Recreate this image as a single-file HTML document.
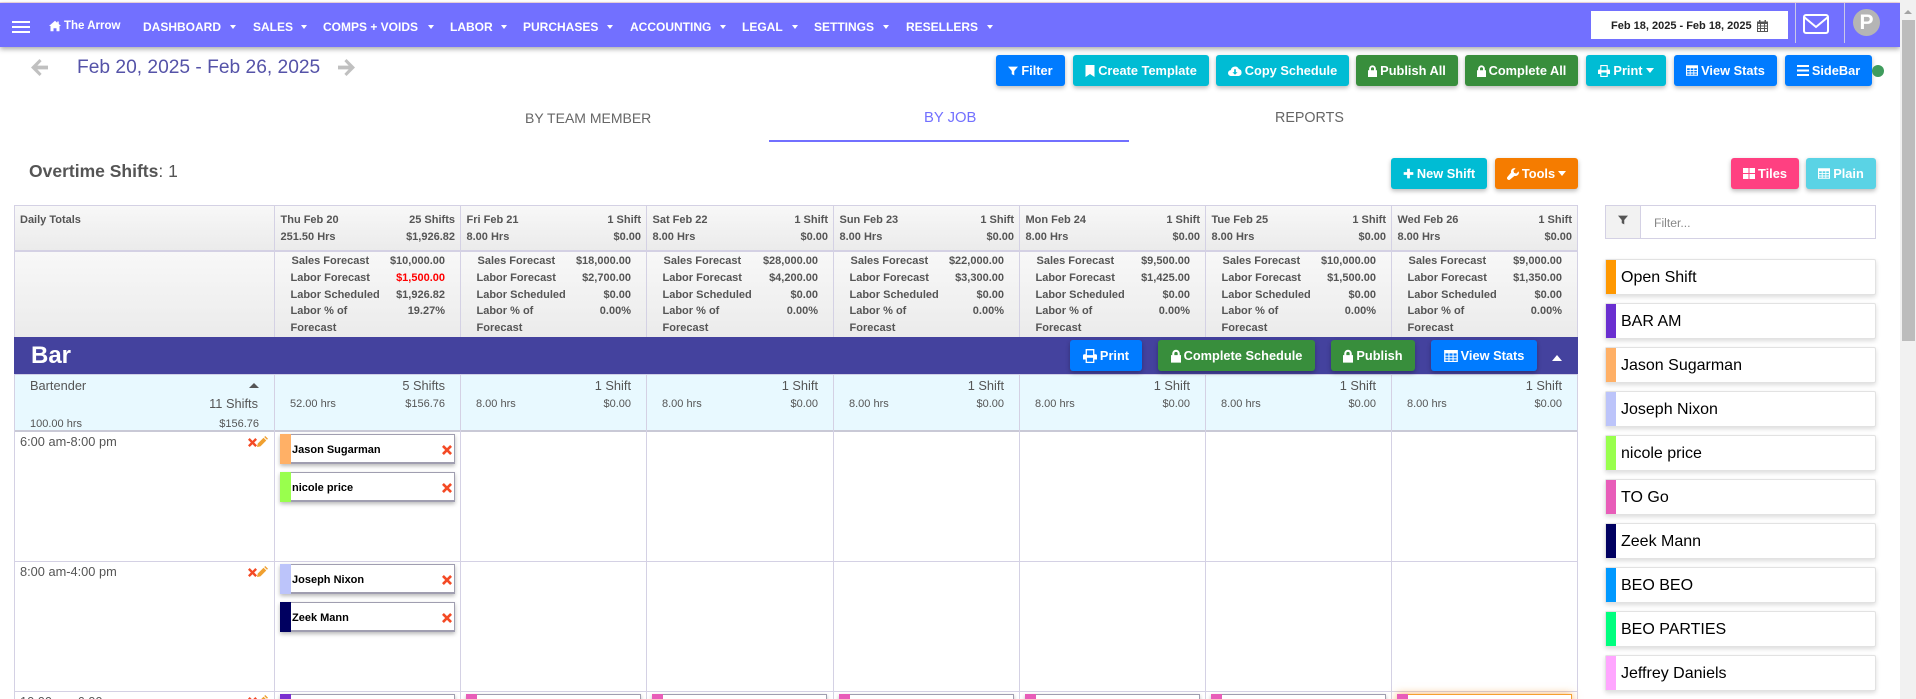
<!DOCTYPE html>
<html lang="en"><head><meta charset="utf-8"><title>Schedule</title>
<style>
*{box-sizing:border-box}
html,body{margin:0;padding:0;background:#fff;width:1916px;height:699px;overflow:hidden;font-family:"Liberation Sans",Arial,sans-serif;color:#555}
#p{position:absolute;left:0;top:0;width:1916px;height:699px;overflow:hidden}
.a,.t,.b,.c,.s,.l,.r{position:absolute}
.t{white-space:nowrap;line-height:14px}
.n{font-weight:700;font-size:12px;color:#fff;top:20px}
.k{position:absolute;top:25px;width:0;height:0;border:3.5px solid transparent;border-top:4px solid #fff;border-bottom:0}
.b{height:31px;border-radius:3px;display:flex;align-items:center;justify-content:center;gap:3px;color:#fff;font-weight:700;font-size:12.8px;white-space:nowrap;box-shadow:0 2px 5px rgba(0,0,0,.28)}
.b svg{fill:#fff;display:block;flex:none}
.blue{background:#007bff}.cy{background:#00bcd4}.gr{background:#388e3c}.or{background:#f57c00}.pk{background:#ff4081}.pl{background:#5ad3e5}
.v{position:absolute;width:1px;background:#d4d1e4}
.h{position:absolute;height:1px;left:14px;width:1564px;background:#d4d1e4}
.c{top:0;height:699px}
.g{font-size:11px;font-weight:700;color:#555}
.m{font-size:11px;color:#555}
.d{font-size:12.8px;color:#555}
.s{left:6px;width:175px;height:30px;border:1px solid #a09eb0;border-bottom-width:2px;box-shadow:0 2px 4px rgba(0,0,0,.28);background:#fff}
.s i{position:absolute;left:-1px;top:-1px;bottom:-2px;width:11px}
.s span{position:absolute;left:11px;top:8px;font-size:11px;font-weight:700;color:#000;white-space:nowrap;line-height:14px}
.s svg{position:absolute;right:2px;top:10px;fill:#f44a25}
.i{position:absolute;left:1605px;width:271px;height:36px;border:1px solid #e2e2e2;background:#fff;box-shadow:0 2px 5px rgba(0,0,0,.14);border-radius:2px}
.i i{position:absolute;left:0;top:0;bottom:0;width:10px}
.i span{position:absolute;left:15px;top:8px;font-size:16px;line-height:20px;color:#000;white-space:nowrap}
</style></head><body><div id="p">

<!-- top bar -->
<div class="a" style="left:0;top:2px;width:1916px;height:1px;background:#f6dbe4"></div>
<div class="a" style="left:0;top:3px;width:1900px;height:44px;background:#7270ff;box-shadow:0 2px 5px rgba(0,0,0,.35)"></div>
<div class="a" style="left:12px;top:21px;width:18px;height:2px;background:#fff"></div>
<div class="a" style="left:12px;top:26px;width:18px;height:2px;background:#fff"></div>
<div class="a" style="left:12px;top:31px;width:18px;height:2px;background:#fff"></div>
<svg class="a" style="left:49px;top:20px" width="12" height="12" viewBox="0 0 16 16" fill="#fff"><path d="M8 1 0 8h2v7h4v-4h4v4h4V8h2l-3-2.6V2h-2v1.7z"/></svg>
<div class="t" style="left:64px;top:19px;font-size:11.5px;font-weight:700;color:#fff">The Arrow</div>
<div class="t n" style="left:143px">DASHBOARD</div><div class="k" style="left:230px"></div>
<div class="t n" style="left:253px">SALES</div><div class="k" style="left:301px"></div>
<div class="t n" style="left:323px">COMPS + VOIDS</div><div class="k" style="left:428px"></div>
<div class="t n" style="left:450px">LABOR</div><div class="k" style="left:501px"></div>
<div class="t n" style="left:523px">PURCHASES</div><div class="k" style="left:607px"></div>
<div class="t n" style="left:630px">ACCOUNTING</div><div class="k" style="left:720px"></div>
<div class="t n" style="left:742px">LEGAL</div><div class="k" style="left:792px"></div>
<div class="t n" style="left:814px">SETTINGS</div><div class="k" style="left:883px"></div>
<div class="t n" style="left:906px">RESELLERS</div><div class="k" style="left:987px"></div>

<div class="a" style="left:1591px;top:11px;width:197px;height:28px;background:#fff"></div>
<div class="t" style="left:1611px;top:19px;font-size:11px;font-weight:700;color:#222">Feb 18, 2025 - Feb 18, 2025</div>
<svg class="a" style="left:1757px;top:20px" width="11" height="12" viewBox="0 0 11 12" fill="#555"><path fill-rule="evenodd" d="M2 0h1.500v1.500h4V0H9v1.500h2V12H0V1.500h2zM1 4v1.500h2V4zM4 4v1.500h3V4zM8 4v1.500h2V4zM1 6.500V8h2V6.500zM4 6.500V8h3V6.500zM8 6.500V8h2V6.500zM1 9v2h2V9zM4 9v2h3V9zM8 9v2h2V9z"/></svg>
<div class="a" style="left:1795px;top:3px;width:1px;height:40px;background:#c9c8e8"></div>
<div class="a" style="left:1844px;top:3px;width:1px;height:40px;background:#c9c8e8"></div>
<svg class="a" style="left:1803px;top:14px" width="26" height="20" viewBox="0 0 26 20" fill="none" stroke="#fff" stroke-width="2"><rect x="1" y="1" width="24" height="18" rx="2"/><path d="M1 3l12 10L25 3"/></svg>
<div class="a" style="left:1853px;top:9px;width:27px;height:27px;border-radius:50%;background:#b5b5b5;color:#fff;font-weight:700;font-size:21px;line-height:27px;text-align:center">P</div>

<!-- scrollbar -->
<div class="a" style="left:1900px;top:0;width:16px;height:699px;background:#f1f1f1"></div>
<div class="a" style="left:1902px;top:20px;width:13px;height:321px;background:#bcbcbc"></div>
<div class="a" style="left:1904px;top:10px;width:0;height:0;border:4px solid transparent;border-bottom:4px solid #a3a3a3;border-top:0"></div>

<!-- date nav -->
<svg class="a" style="left:31px;top:59px" width="17" height="17" viewBox="0 0 16 16" fill="#c0c0c0"><path d="M8 0l2 2-4 4.200h10v3.600H6l4 4.200-2 2-8-8z"/></svg>
<div class="t" style="left:77px;top:57px;font-size:19.2px;line-height:22px;color:#5553a8">Feb 20, 2025 - Feb 26, 2025</div>
<svg class="a" style="left:338px;top:59px" width="17" height="17" viewBox="0 0 16 16" fill="#c0c0c0"><path d="M8 0l-2 2 4 4.200H0v3.600h10l-4 4.200 2 2 8-8z"/></svg>

<!-- top buttons -->
<div class="b blue" style="left:996px;top:55px;width:69px"><svg width="10" height="10" viewBox="0 0 16 16"><path d="M0 1h16L10 8v7l-4-2V8z"/></svg>Filter</div>
<div class="b cy" style="left:1073px;top:55px;width:136px"><svg width="10" height="12" viewBox="0 0 12 16"><path d="M0 0h12v16l-6-4-6 4z"/></svg>Create Template</div>
<div class="b cy" style="left:1216px;top:55px;width:133px"><svg width="14" height="11" viewBox="0 0 16 13"><path fill-rule="evenodd" d="M3.500 13A3.500 3.500 0 0 1 3 6a5 5 0 0 1 9.500-1.200A4.200 4.200 0 0 1 12.500 13zM7 5v3.500H5l3 3 3-3H9V5z"/></svg>Copy Schedule</div>
<div class="b gr" style="left:1356px;top:55px;width:102px"><svg width="9" height="12" viewBox="0 0 12 16"><path fill-rule="evenodd" d="M0 7h1.500V5a4.500 4.500 0 0 1 9 0v2H12v9H0zM4 7h4V5a2 2 0 0 0-4 0z"/></svg>Publish All</div>
<div class="b gr" style="left:1465px;top:55px;width:113px"><svg width="9" height="12" viewBox="0 0 12 16"><path fill-rule="evenodd" d="M0 7h1.500V5a4.500 4.500 0 0 1 9 0v2H12v9H0zM4 7h4V5a2 2 0 0 0-4 0z"/></svg>Complete All</div>
<div class="b cy" style="left:1586px;top:55px;width:80px"><svg width="12" height="12" viewBox="0 0 16 16"><path fill-rule="evenodd" d="M3 0h10v6h1.500A1.500 1.500 0 0 1 16 7.500V12h-3v4H3v-4H0V7.500A1.500 1.500 0 0 1 1.500 6H3zM4.500 1.500V7h7V1.500zM4.500 10v4.500h7V10z"/></svg>Print<svg width="8" height="5" viewBox="0 0 8 5"><path d="M0 0h8L4 5z"/></svg></div>
<div class="b blue" style="left:1674px;top:55px;width:103px"><svg width="12" height="11" viewBox="0 0 16 14"><path fill-rule="evenodd" d="M0 0h16v14H0zM1.500 4v2.500h3.500V4zM6.200 4v2.500h3.600V4zM11 4v2.500h3.500V4zM1.500 7.700v2h3.500v-2zM6.200 7.700v2h3.600v-2zM11 7.700v2h3.500v-2zM1.500 11v1.700h3.500V11zM6.200 11v1.700h3.600V11zM11 11v1.700h3.500V11z"/></svg>View Stats</div>
<div class="b blue" style="left:1785px;top:55px;width:87px"><svg width="12" height="11" viewBox="0 0 12 11"><path d="M0 0h12v2H0zM0 4.500h12v2H0zM0 9h12v2H0z"/></svg>SideBar</div>
<div class="a" style="left:1872px;top:65px;width:12px;height:12px;border-radius:50%;background:#3f9c5d"></div>

<!-- tabs -->
<div class="t" style="left:525px;top:111px;font-size:14px;color:#666">BY TEAM MEMBER</div>
<div class="t" style="left:924px;top:111px;font-size:14.8px;color:#7270ff">BY JOB</div>
<div class="t" style="left:1275px;top:111px;font-size:14.3px;color:#666">REPORTS</div>
<div class="a" style="left:769px;top:140px;width:360px;height:2px;background:#7270ff"></div>

<div class="t" style="left:29px;top:161px;font-size:17.5px;line-height:20px;color:#555"><b>Overtime Shifts</b>: 1</div>

<div class="b cy" style="left:1391px;top:158px;width:96px"><svg width="11" height="11" viewBox="0 0 16 16"><path d="M6 1h4v5h5v4h-5v5H6v-5H1V6h5z"/></svg>New Shift</div>
<div class="b or" style="left:1495px;top:158px;width:83px"><svg width="12" height="12" viewBox="0 0 16 16"><path d="M15.500 4.500 12.500 7.500 9.500 6.500 8.500 3.500 11.500.5a4.500 4.500 0 0 0-6 5.500L.8 11.700a2.400 2.400 0 0 0 3.500 3.500l5.700-4.700a4.500 4.500 0 0 0 5.500-6z"/></svg>Tools<svg width="8" height="5" viewBox="0 0 8 5"><path d="M0 0h8L4 5z"/></svg></div>
<div class="b pk" style="left:1731px;top:158px;width:68px"><svg width="12" height="11" viewBox="0 0 12 11"><path d="M0 0h5.500v5H0zM6.500 0H12v5H6.500zM0 6h5.500v5H0zM6.500 6H12v5H6.500z"/></svg>Tiles</div>
<div class="b pl" style="left:1806px;top:158px;width:70px"><svg width="12" height="11" viewBox="0 0 16 14"><path fill-rule="evenodd" d="M0 0h16v14H0zM1.500 4v2.500h3.500V4zM6.200 4v2.500h3.600V4zM11 4v2.500h3.500V4zM1.500 7.700v2h3.500v-2zM6.200 7.700v2h3.600v-2zM11 7.700v2h3.500v-2zM1.500 11v1.700h3.500V11zM6.200 11v1.700h3.600V11zM11 11v1.700h3.500V11z"/></svg>Plain</div>

<!-- table backgrounds -->
<div class="a" style="left:14px;top:205px;width:1564px;height:45px;background:linear-gradient(#f8f8f8,#ebebeb)"></div>
<div class="a" style="left:14px;top:252px;width:1564px;height:85px;background:linear-gradient(#f8f8f8,#ebebeb)"></div>
<div class="a" style="left:14px;top:375px;width:1564px;height:56px;background:#e8f9ff"></div>
<div class="h" style="top:205px"></div>
<div class="h" style="top:250px;height:2px"></div>
<div class="h" style="top:430px;background:#c9c9d6;height:2px"></div>
<div class="h" style="top:561px"></div>
<div class="h" style="top:691px"></div>

<div class="v" style="left:14px;top:205px;height:132px"></div><div class="v" style="left:14px;top:375px;height:324px"></div>
<div class="v" style="left:274px;top:205px;height:132px"></div><div class="v" style="left:274px;top:375px;height:324px"></div>
<div class="v" style="left:460px;top:205px;height:132px"></div><div class="v" style="left:460px;top:375px;height:324px"></div>
<div class="v" style="left:646px;top:205px;height:132px"></div><div class="v" style="left:646px;top:375px;height:324px"></div>
<div class="v" style="left:833px;top:205px;height:132px"></div><div class="v" style="left:833px;top:375px;height:324px"></div>
<div class="v" style="left:1019px;top:205px;height:132px"></div><div class="v" style="left:1019px;top:375px;height:324px"></div>
<div class="v" style="left:1205px;top:205px;height:132px"></div><div class="v" style="left:1205px;top:375px;height:324px"></div>
<div class="v" style="left:1391px;top:205px;height:132px"></div><div class="v" style="left:1391px;top:375px;height:324px"></div>
<div class="v" style="left:1577px;top:205px;height:132px"></div><div class="v" style="left:1577px;top:375px;height:324px"></div>

<!-- band -->
<div class="a" style="left:14px;top:337px;width:1564px;height:38px;background:#44429e;border-bottom:1px solid #cfcfe6"></div>
<div class="t" style="left:31px;top:343px;font-size:24px;line-height:26px;font-weight:700;color:#fff">Bar</div>
<div class="b blue" style="left:1070px;top:340px;width:72px"><svg width="14" height="14" viewBox="0 0 16 16"><path fill-rule="evenodd" d="M3 0h10v6h1.500A1.500 1.500 0 0 1 16 7.500V12h-3v4H3v-4H0V7.500A1.500 1.500 0 0 1 1.500 6H3zM4.500 1.500V7h7V1.500zM4.500 10v4.500h7V10z"/></svg>Print</div>
<div class="b gr" style="left:1158px;top:340px;width:157px"><svg width="10" height="14" viewBox="0 0 12 16"><path fill-rule="evenodd" d="M0 7h1.500V5a4.500 4.500 0 0 1 9 0v2H12v9H0zM4 7h4V5a2 2 0 0 0-4 0z"/></svg>Complete Schedule</div>
<div class="b gr" style="left:1331px;top:340px;width:84px"><svg width="10" height="14" viewBox="0 0 12 16"><path fill-rule="evenodd" d="M0 7h1.500V5a4.500 4.500 0 0 1 9 0v2H12v9H0zM4 7h4V5a2 2 0 0 0-4 0z"/></svg>Publish</div>
<div class="b blue" style="left:1431px;top:340px;width:106px"><svg width="14" height="12" viewBox="0 0 16 14"><path fill-rule="evenodd" d="M0 0h16v14H0zM1.500 4v2.500h3.500V4zM6.200 4v2.500h3.600V4zM11 4v2.500h3.500V4zM1.500 7.700v2h3.500v-2zM6.200 7.700v2h3.600v-2zM11 7.700v2h3.500v-2zM1.500 11v1.700h3.500V11zM6.200 11v1.700h3.600V11zM11 11v1.700h3.500V11z"/></svg>View Stats</div>
<div class="a" style="left:1552px;top:355px;width:0;height:0;border:5px solid transparent;border-bottom:6px solid #fff;border-top:0"></div>

<!-- first column -->
<div class="t g" style="left:20px;top:213px">Daily Totals</div>
<div class="t d" style="left:30px;top:379px">Bartender</div>
<div class="a" style="left:249px;top:383px;width:0;height:0;border:5px solid transparent;border-bottom:5px solid #555;border-top:0"></div>
<div class="t d" style="right:1658px;top:397px">11 Shifts</div>
<div class="t m" style="left:30px;top:417px">100.00 hrs</div>
<div class="t m" style="right:1657px;top:417px">$156.76</div>

<div class="t d" style="left:20px;top:435px">6:00 am-8:00 pm</div>
<svg class="a" style="left:248px;top:438px" width="9" height="9" viewBox="0 0 16 16" fill="#f44a25"><path d="M3 0 8 5l5-5 3 3-5 5 5 5-3 3-5-5-5 5-3-3 5-5-5-5z"/></svg>
<svg class="a" style="left:257px;top:436px" width="11" height="11" viewBox="0 0 16 16" fill="#f0a030"><path d="M12 0l4 4-1.500 1.500-4-4zM9.500 2.500l4 4L5 15l-5 1 1-5z"/></svg>
<div class="t d" style="left:20px;top:565px">8:00 am-4:00 pm</div>
<svg class="a" style="left:248px;top:568px" width="9" height="9" viewBox="0 0 16 16" fill="#f44a25"><path d="M3 0 8 5l5-5 3 3-5 5 5 5-3 3-5-5-5 5-3-3 5-5-5-5z"/></svg>
<svg class="a" style="left:257px;top:566px" width="11" height="11" viewBox="0 0 16 16" fill="#f0a030"><path d="M12 0l4 4-1.500 1.500-4-4zM9.500 2.500l4 4L5 15l-5 1 1-5z"/></svg>
<div class="t d" style="left:20px;top:695px">10:00 am-6:00 pm</div>
<svg class="a" style="left:248px;top:697px" width="9" height="9" viewBox="0 0 16 16" fill="#f44a25"><path d="M3 0 8 5l5-5 3 3-5 5 5 5-3 3-5-5-5 5-3-3 5-5-5-5z"/></svg>
<svg class="a" style="left:257px;top:695px" width="11" height="11" viewBox="0 0 16 16" fill="#f0a030"><path d="M12 0l4 4-1.500 1.500-4-4zM9.500 2.500l4 4L5 15l-5 1 1-5z"/></svg>

<!-- Thu -->
<div class="c" style="left:274px;width:186px">
<div class="t g" style="left:6.500px;top:213px">Thu Feb 20</div><div class="t g" style="right:5px;top:213px">25 Shifts</div>
<div class="t g" style="left:6.500px;top:230px">251.50 Hrs</div><div class="t g" style="right:5px;top:230px">$1,926.82</div>
<div class="t g" style="left:17.500px;top:254px">Sales Forecast</div><div class="t g" style="right:15px;top:254px">$10,000.00</div>
<div class="t g" style="left:16.500px;top:271px">Labor Forecast</div><div class="t g" style="right:15px;top:271px;color:#f00">$1,500.00</div>
<div class="t g" style="left:16.500px;top:288px">Labor Scheduled</div><div class="t g" style="right:15px;top:288px">$1,926.82</div>
<div class="t g" style="left:16.500px;top:304px">Labor % of</div><div class="t g" style="right:15px;top:304px">19.27%</div>
<div class="t g" style="left:16.500px;top:321px">Forecast</div>
<div class="t d" style="right:15px;top:379px">5 Shifts</div>
<div class="t m" style="left:16px;top:397px">52.00 hrs</div><div class="t m" style="right:15px;top:397px">$156.76</div>
<div class="s" style="top:434px"><i style="background:#ffb066"></i><span>Jason Sugarman</span><svg width="10" height="10" viewBox="0 0 16 16"><path d="M3 0 8 5l5-5 3 3-5 5 5 5-3 3-5-5-5 5-3-3 5-5-5-5z"/></svg></div>
<div class="s" style="top:472px"><i style="background:#99ff4d"></i><span>nicole price</span><svg width="10" height="10" viewBox="0 0 16 16"><path d="M3 0 8 5l5-5 3 3-5 5 5 5-3 3-5-5-5 5-3-3 5-5-5-5z"/></svg></div>
<div class="s" style="top:564px"><i style="background:#bcc4fa"></i><span>Joseph Nixon</span><svg width="10" height="10" viewBox="0 0 16 16"><path d="M3 0 8 5l5-5 3 3-5 5 5 5-3 3-5-5-5 5-3-3 5-5-5-5z"/></svg></div>
<div class="s" style="top:602px"><i style="background:#000060"></i><span>Zeek Mann</span><svg width="10" height="10" viewBox="0 0 16 16"><path d="M3 0 8 5l5-5 3 3-5 5 5 5-3 3-5-5-5 5-3-3 5-5-5-5z"/></svg></div>
<div class="s" style="top:694px"><i style="background:#7b2fd0"></i></div>
</div>

<!-- Fri -->
<div class="c" style="left:460px;width:186px">
<div class="t g" style="left:6.500px;top:213px">Fri Feb 21</div><div class="t g" style="right:5px;top:213px">1 Shift</div>
<div class="t g" style="left:6.500px;top:230px">8.00 Hrs</div><div class="t g" style="right:5px;top:230px">$0.00</div>
<div class="t g" style="left:17.500px;top:254px">Sales Forecast</div><div class="t g" style="right:15px;top:254px">$18,000.00</div>
<div class="t g" style="left:16.500px;top:271px">Labor Forecast</div><div class="t g" style="right:15px;top:271px">$2,700.00</div>
<div class="t g" style="left:16.500px;top:288px">Labor Scheduled</div><div class="t g" style="right:15px;top:288px">$0.00</div>
<div class="t g" style="left:16.500px;top:304px">Labor % of</div><div class="t g" style="right:15px;top:304px">0.00%</div>
<div class="t g" style="left:16.500px;top:321px">Forecast</div>
<div class="t d" style="right:15px;top:379px">1 Shift</div>
<div class="t m" style="left:16px;top:397px">8.00 hrs</div><div class="t m" style="right:15px;top:397px">$0.00</div>
<div class="s" style="top:694px"><i style="background:#e85db9"></i></div>
</div>

<!-- Sat -->
<div class="c" style="left:646px;width:187px">
<div class="t g" style="left:6.500px;top:213px">Sat Feb 22</div><div class="t g" style="right:5px;top:213px">1 Shift</div>
<div class="t g" style="left:6.500px;top:230px">8.00 Hrs</div><div class="t g" style="right:5px;top:230px">$0.00</div>
<div class="t g" style="left:17.500px;top:254px">Sales Forecast</div><div class="t g" style="right:15px;top:254px">$28,000.00</div>
<div class="t g" style="left:16.500px;top:271px">Labor Forecast</div><div class="t g" style="right:15px;top:271px">$4,200.00</div>
<div class="t g" style="left:16.500px;top:288px">Labor Scheduled</div><div class="t g" style="right:15px;top:288px">$0.00</div>
<div class="t g" style="left:16.500px;top:304px">Labor % of</div><div class="t g" style="right:15px;top:304px">0.00%</div>
<div class="t g" style="left:16.500px;top:321px">Forecast</div>
<div class="t d" style="right:15px;top:379px">1 Shift</div>
<div class="t m" style="left:16px;top:397px">8.00 hrs</div><div class="t m" style="right:15px;top:397px">$0.00</div>
<div class="s" style="top:694px"><i style="background:#e85db9"></i></div>
</div>

<!-- Sun -->
<div class="c" style="left:833px;width:186px">
<div class="t g" style="left:6.500px;top:213px">Sun Feb 23</div><div class="t g" style="right:5px;top:213px">1 Shift</div>
<div class="t g" style="left:6.500px;top:230px">8.00 Hrs</div><div class="t g" style="right:5px;top:230px">$0.00</div>
<div class="t g" style="left:17.500px;top:254px">Sales Forecast</div><div class="t g" style="right:15px;top:254px">$22,000.00</div>
<div class="t g" style="left:16.500px;top:271px">Labor Forecast</div><div class="t g" style="right:15px;top:271px">$3,300.00</div>
<div class="t g" style="left:16.500px;top:288px">Labor Scheduled</div><div class="t g" style="right:15px;top:288px">$0.00</div>
<div class="t g" style="left:16.500px;top:304px">Labor % of</div><div class="t g" style="right:15px;top:304px">0.00%</div>
<div class="t g" style="left:16.500px;top:321px">Forecast</div>
<div class="t d" style="right:15px;top:379px">1 Shift</div>
<div class="t m" style="left:16px;top:397px">8.00 hrs</div><div class="t m" style="right:15px;top:397px">$0.00</div>
<div class="s" style="top:694px"><i style="background:#e85db9"></i></div>
</div>

<!-- Mon -->
<div class="c" style="left:1019px;width:186px">
<div class="t g" style="left:6.500px;top:213px">Mon Feb 24</div><div class="t g" style="right:5px;top:213px">1 Shift</div>
<div class="t g" style="left:6.500px;top:230px">8.00 Hrs</div><div class="t g" style="right:5px;top:230px">$0.00</div>
<div class="t g" style="left:17.500px;top:254px">Sales Forecast</div><div class="t g" style="right:15px;top:254px">$9,500.00</div>
<div class="t g" style="left:16.500px;top:271px">Labor Forecast</div><div class="t g" style="right:15px;top:271px">$1,425.00</div>
<div class="t g" style="left:16.500px;top:288px">Labor Scheduled</div><div class="t g" style="right:15px;top:288px">$0.00</div>
<div class="t g" style="left:16.500px;top:304px">Labor % of</div><div class="t g" style="right:15px;top:304px">0.00%</div>
<div class="t g" style="left:16.500px;top:321px">Forecast</div>
<div class="t d" style="right:15px;top:379px">1 Shift</div>
<div class="t m" style="left:16px;top:397px">8.00 hrs</div><div class="t m" style="right:15px;top:397px">$0.00</div>
<div class="s" style="top:694px"><i style="background:#e85db9"></i></div>
</div>

<!-- Tue -->
<div class="c" style="left:1205px;width:186px">
<div class="t g" style="left:6.500px;top:213px">Tue Feb 25</div><div class="t g" style="right:5px;top:213px">1 Shift</div>
<div class="t g" style="left:6.500px;top:230px">8.00 Hrs</div><div class="t g" style="right:5px;top:230px">$0.00</div>
<div class="t g" style="left:17.500px;top:254px">Sales Forecast</div><div class="t g" style="right:15px;top:254px">$10,000.00</div>
<div class="t g" style="left:16.500px;top:271px">Labor Forecast</div><div class="t g" style="right:15px;top:271px">$1,500.00</div>
<div class="t g" style="left:16.500px;top:288px">Labor Scheduled</div><div class="t g" style="right:15px;top:288px">$0.00</div>
<div class="t g" style="left:16.500px;top:304px">Labor % of</div><div class="t g" style="right:15px;top:304px">0.00%</div>
<div class="t g" style="left:16.500px;top:321px">Forecast</div>
<div class="t d" style="right:15px;top:379px">1 Shift</div>
<div class="t m" style="left:16px;top:397px">8.00 hrs</div><div class="t m" style="right:15px;top:397px">$0.00</div>
<div class="s" style="top:694px"><i style="background:#e85db9"></i></div>
</div>

<!-- Wed -->
<div class="c" style="left:1391px;width:186px">
<div class="t g" style="left:6.500px;top:213px">Wed Feb 26</div><div class="t g" style="right:5px;top:213px">1 Shift</div>
<div class="t g" style="left:6.500px;top:230px">8.00 Hrs</div><div class="t g" style="right:5px;top:230px">$0.00</div>
<div class="t g" style="left:17.500px;top:254px">Sales Forecast</div><div class="t g" style="right:15px;top:254px">$9,000.00</div>
<div class="t g" style="left:16.500px;top:271px">Labor Forecast</div><div class="t g" style="right:15px;top:271px">$1,350.00</div>
<div class="t g" style="left:16.500px;top:288px">Labor Scheduled</div><div class="t g" style="right:15px;top:288px">$0.00</div>
<div class="t g" style="left:16.500px;top:304px">Labor % of</div><div class="t g" style="right:15px;top:304px">0.00%</div>
<div class="t g" style="left:16.500px;top:321px">Forecast</div>
<div class="t d" style="right:15px;top:379px">1 Shift</div>
<div class="t m" style="left:16px;top:397px">8.00 hrs</div><div class="t m" style="right:15px;top:397px">$0.00</div>
<div class="s" style="top:694px;border-color:#f5a030;box-shadow:0 0 8px rgba(245,150,40,.7)"><i style="background:#e85db9"></i></div>
</div>

<!-- sidebar -->
<div class="a" style="left:1605px;top:205px;width:271px;height:34px;border:1px solid #d4d1e4;background:#fff"></div>
<div class="a" style="left:1605px;top:205px;width:36px;height:34px;border:1px solid #d4d1e4;background:#f2f2f2"></div>
<svg class="a" style="left:1618px;top:215px" width="10" height="10" viewBox="0 0 16 16" fill="#555"><path d="M0 1h16L10 8v7l-4-2V8z"/></svg>
<div class="t" style="left:1654px;top:216px;font-size:12.2px;color:#888">Filter...</div>

<div class="i" style="top:259px"><i style="background:#ff9800"></i><span>Open Shift</span></div>
<div class="i" style="top:303px"><i style="background:#6a2fd0"></i><span>BAR AM</span></div>
<div class="i" style="top:347px"><i style="background:#ffb066"></i><span>Jason Sugarman</span></div>
<div class="i" style="top:391px"><i style="background:#bcc4fa"></i><span>Joseph Nixon</span></div>
<div class="i" style="top:435px"><i style="background:#99ff4d"></i><span>nicole price</span></div>
<div class="i" style="top:479px"><i style="background:#e85db9"></i><span>TO Go</span></div>
<div class="i" style="top:523px"><i style="background:#000060"></i><span>Zeek Mann</span></div>
<div class="i" style="top:567px"><i style="background:#0099ff"></i><span>BEO BEO</span></div>
<div class="i" style="top:611px"><i style="background:#00ff7f"></i><span>BEO PARTIES</span></div>
<div class="i" style="top:655px"><i style="background:#ffa6ff"></i><span>Jeffrey Daniels</span></div>

</div></body></html>
